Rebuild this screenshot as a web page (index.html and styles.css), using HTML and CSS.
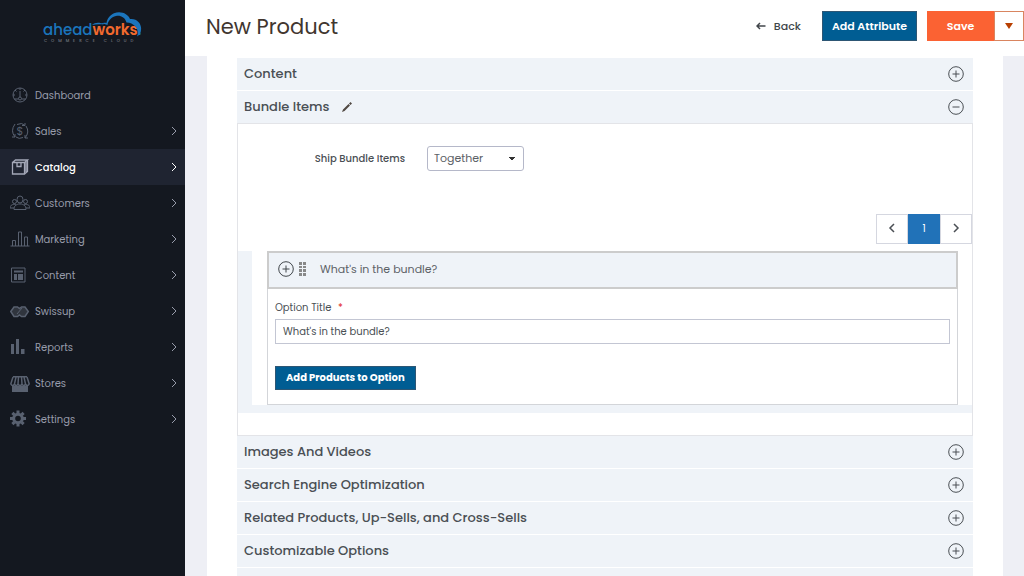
FILE: index.html
```html
<!DOCTYPE html>
<html lang="en"><head><meta charset="utf-8">
<meta name="viewport" content="width=device-width, initial-scale=1">
<title>New Product</title>
<link rel="stylesheet" href="styles.css">
</head><body>
<svg class="defs" aria-hidden="true">
  <symbol id="chevron" viewBox="0 0 8 10"><path d="M2 1l4 4-4 4"/></symbol>
  <symbol id="plus" viewBox="0 0 16 16"><circle cx="8" cy="8" r="7.3"/><path d="M4.5 8h7M8 4.5v7"/></symbol>
  <symbol id="minus" viewBox="0 0 16 16"><circle cx="8" cy="8" r="7.3"/><path d="M4.5 8h7"/></symbol>
</svg>

<div class="app">
  <aside class="sidebar">
    <a class="logo" href="#">
      <svg class="cloud" viewBox="0 0 50 28"><path d="M0 13C3 10 8 10 12 12.500C8 12 4 12 0 13ZM9 11.500C11 10.500 13 10.500 14.500 11C15 7 18 3 22 1.300C29-1.500 36 2 38 7C45 6 50 12 49 18C49 21 47.500 23 45 24.500C47.500 19 44 11 34.500 10.500C33 5 28 3 24 4C19 5 16 9 15.500 13C13 12 12 12 9 11.500Z"/></svg>
      <span class="logo-name">ahead<b>works</b>.</span>
      <span class="logo-sub">COMMERCE CLOUD</span>
    </a>
    <nav class="menu">
      <a href="#">
        <svg class="icon" viewBox="0 0 20 20"><circle cx="10" cy="10" r="7"/><path d="M4.500 14h4M11.500 14h4M10 6v6M10 3v2M3 10h2M15 10h2M5 5l1.500 1.500M15 5l-1.500 1.500"/><circle cx="10" cy="13.500" r="1.500"/></svg>
        <span>Dashboard</span>
      </a>
      <a href="#">
        <svg class="icon" viewBox="0 0 20 20"><path d="M5 3Q0 10 5 16M5 16H2M5 16v-3M7 3.500Q12 1 15 4.500M15 4.500V2M15 4.500h-3M16 5Q20 11 15 17M15 17v-3M15 17h3M13 16.500Q9 18.500 6 16"/><text x="10" y="14" text-anchor="middle">$</text></svg>
        <span>Sales</span><svg class="arrow"><use href="#chevron"/></svg>
      </a>
      <a class="active" href="#">
        <svg class="icon bold" viewBox="0 0 20 20"><path d="M2.500 5.500h12v11.500h-12zM2.500 5.500l3-2.500h12l-3 2.500M17.500 3v11.500l-3 2.500M16 4.500v11.500M7 5.500v4h4v-4"/></svg>
        <span>Catalog</span><svg class="arrow"><use href="#chevron"/></svg>
      </a>
      <a href="#">
        <svg class="icon" viewBox="0 0 20 20"><ellipse cx="10" cy="6.500" rx="3" ry="3.500"/><circle cx="4.500" cy="8.500" r="2"/><circle cx="15.500" cy="8.500" r="2"/><path d="M4 16.500h12c0-4-2-4.500-4.500-5.500h-3C6 12 4 12.500 4 16.500zM4 15H0c0-3 2-3 4-4l2 1M16 15h4c0-3-2-3-4-4l-2 1"/></svg>
        <span>Customers</span><svg class="arrow"><use href="#chevron"/></svg>
      </a>
      <a href="#">
        <svg class="icon" viewBox="0 0 20 20"><path d="M.5 17h19M2.500 17v-5.500h3V17M8.500 17V3h3v14M14.500 17V8h3v9"/></svg>
        <span>Marketing</span><svg class="arrow"><use href="#chevron"/></svg>
      </a>
      <a href="#">
        <svg class="icon" viewBox="0 0 20 20"><path d="M1.500 3h13.500v14h-13.500z"/><path class="fill" d="M4 5.500h9v2H4zM4 9h3v6H4zM8 9h5v6H8z"/></svg>
        <span>Content</span><svg class="arrow"><use href="#chevron"/></svg>
      </a>
      <a href="#">
        <svg class="icon" viewBox="0 0 20 20"><path class="dim" d="M4 6.500h11l3 4-3 4.500H4l-3-4.500z"/><path class="heavy" d="M4 6h3.500l2 1.500 2-1.500H15l3.300 4.500L15 15.500h-3.500l-2-1.500-2 1.500H4L.8 10.500z"/><path d="M7 13l5-6"/></svg>
        <span>Swissup</span><svg class="arrow"><use href="#chevron"/></svg>
      </a>
      <a href="#">
        <svg class="icon" viewBox="0 0 20 20"><path class="fill" d="M1 7h3v10H1zM6 2h3v15H6zM11 12h3.500v5H11z"/></svg>
        <span>Reports</span><svg class="arrow"><use href="#chevron"/></svg>
      </a>
      <a href="#">
        <svg class="icon" viewBox="0 0 20 20"><path class="fill" d="M2 13h16v6H2zM3 3h14v1.500H3z"/><path class="heavy" d="M3 4L.8 11q1.700 3 3.700 0L6 4M8.500 4L8 11q-1.500 3-3.500 0M11.500 4l.5 7q-2 3-4 0M14 4l1.500 7q-2 3-3.500 0M17 4l2.200 7q-1.700 3-3.700 0"/></svg>
        <span>Stores</span><svg class="arrow"><use href="#chevron"/></svg>
      </a>
      <a href="#">
        <svg class="icon" viewBox="0 0 20 20"><circle class="gear" cx="8" cy="9.500" r="4.300"/><path class="teeth" d="M8 1.500v3M8 14.500v3M0 9.500h3M13 9.500h3M2.400 3.900l2 2M11.600 13.100l2 2M2.400 15.100l2-2M11.600 5.900l2-2"/></svg>
        <span>Settings</span><svg class="arrow"><use href="#chevron"/></svg>
      </a>
    </nav>
  </aside>

  <main class="page">
    <header class="toolbar">
      <h1>New Product</h1>
      <button class="back" type="button"><svg viewBox="0 0 10 8"><path d="M9.500 4H1M4 1L1 4l3 3"/></svg>Back</button>
      <button class="btn" type="button">Add Attribute</button>
      <div class="split">
        <button class="save" type="button">Save</button>
        <button class="toggle" type="button" aria-label="More save options"><svg viewBox="0 0 8 6"><path d="M0 0h8L4 6z"/></svg></button>
      </div>
    </header>

    <div class="scroll">
      <div class="card">
        <section>
          <button class="section-title" type="button">Content<svg class="state"><use href="#plus"/></svg></button>
        </section>
        <section class="open">
          <button class="section-title" type="button">Bundle Items
            <svg class="pencil" viewBox="0 0 10 10"><path d="M0 10l1-2.500 5.500-5.500 1.500 1.500L2.500 9zM7 1.500L8.500 0 10 1.500 8.500 3z"/></svg>
            <svg class="state"><use href="#minus"/></svg>
          </button>
          <div class="section-body">
            <div class="ship">
              <label for="ship">Ship Bundle Items</label>
              <select id="ship"><option>Together</option><option>Separately</option></select>
            </div>
            <div class="pager">
              <button type="button" aria-label="Previous"><svg viewBox="0 0 8 10"><path d="M6 1L2 5l4 4"/></svg></button>
              <button class="current" type="button">1</button>
              <button type="button" aria-label="Next"><svg><use href="#chevron"/></svg></button>
            </div>
            <div class="options">
              <div class="options-inner">
                <div class="option">
                  <div class="option-head">
                    <svg class="state"><use href="#plus"/></svg>
                    <svg class="grip" viewBox="0 0 8 14"><path d="M0 0h3v3H0zM4 0h3v3H4zM0 4h3v2H0zM4 4h3v2H4zM0 7h3v3H0zM4 7h3v3H4zM0 11h3v3H0zM4 11h3v3H4z"/></svg>
                    <span>What's in the bundle?</span>
                  </div>
                  <div class="option-body">
                    <label for="title">Option Title <em>*</em></label>
                    <input id="title" type="text" value="What's in the bundle?">
                    <button class="btn small" type="button">Add Products to Option</button>
                  </div>
                </div>
              </div>
            </div>
          </div>
        </section>
        <section>
          <button class="section-title" type="button">Images And Videos<svg class="state"><use href="#plus"/></svg></button>
        </section>
        <section>
          <button class="section-title" type="button">Search Engine Optimization<svg class="state"><use href="#plus"/></svg></button>
        </section>
        <section>
          <button class="section-title" type="button">Related Products, Up-Sells, and Cross-Sells<svg class="state"><use href="#plus"/></svg></button>
        </section>
        <section>
          <button class="section-title" type="button">Customizable Options<svg class="state"><use href="#plus"/></svg></button>
        </section>
        <section>
          <button class="section-title" type="button" aria-label="More settings"><svg class="state"><use href="#plus"/></svg></button>
        </section>
      </div>
    </div>
  </main>
</div>
</body></html>
```
FILE: styles.css
```css
* {
  box-sizing: border-box;
}
body {
  margin: 0;
  font-family: Poppins, Inter, sans-serif;
  font-size: 11px;
  color: #4a4f54;
  background: #eeeff5;
}
button, select, input {
  font: inherit;
  color: inherit;
  margin: 0;
  border-radius: 0;
}
button {
  cursor: pointer;
}
svg {
  fill: none;
  stroke: currentColor;
  flex: none;
}
.defs {
  position: absolute;
  width: 0;
  height: 0;
}
.app {
  display: flex;
  height: 100vh;
}

/* sidebar */
.sidebar {
  width: 185px;
  flex: none;
  background: #141820;
}
.logo {
  position: relative;
  display: block;
  height: 77px;
  padding: 21px 0 0 43px;
  color: #1b75bc;
  text-decoration: none;
}
.logo-name {
  display: block;
  font-size: 15px;
  line-height: 18px;
  font-weight: 500;
}
.logo-name b {
  color: #f26a2e;
  font-weight: 600;
}
.logo-sub {
  display: block;
  font-size: 4px;
  line-height: 4px;
  letter-spacing: 4px;
  margin-left: 1px;
  color: #8b8f98;
  white-space: nowrap;
}
.cloud {
  position: absolute;
  left: 92px;
  top: 12px;
  width: 50px;
  height: 28px;
  fill: #1b75bc;
  stroke: none;
}
.menu a {
  display: flex;
  align-items: center;
  height: 36px;
  padding: 0 7px 0 10px;
  color: #989cab;
  font-size: 10px;
  text-decoration: none;
}
.menu span {
  flex: 1;
  margin-left: 5px;
  padding-top: 2px;
}
.icon {
  width: 20px;
  height: 20px;
  color: #596170;
}
.icon text {
  font-size: 11px;
  fill: currentColor;
  stroke: none;
}
.icon .fill {
  fill: currentColor;
  stroke: none;
}
.icon .dim {
  fill: #30353e;
  stroke: none;
}
.icon .heavy {
  stroke-width: 1.5;
}
.icon .gear, .icon .teeth {
  stroke-width: 3;
}
.icon.bold {
  stroke-width: 1.3;
}
.arrow {
  width: 8px;
  height: 10px;
}
.menu .active {
  background: #1f2431;
  color: #fff;
  font-weight: 500;
}
.active .icon {
  color: #a4a8b8;
}

/* header */
.page {
  flex: 1;
  min-width: 0;
  display: flex;
  flex-direction: column;
}
.toolbar {
  display: flex;
  align-items: center;
  flex: none;
  height: 56px;
  padding: 0 0 4px 21px;
  background: #fff;
}
h1 {
  flex: 1;
  margin: 0;
  font-size: 21px;
  font-weight: 400;
  color: #41362f;
}
.back {
  display: flex;
  align-items: center;
  gap: 8px;
  margin-right: 21px;
  padding: 0;
  border: 0;
  background: none;
  color: #41464b;
  font-weight: 500;
}
.back svg {
  width: 10px;
  height: 8px;
  stroke-width: 1.5;
}
.btn {
  height: 30px;
  padding: 0 9px;
  border: 1px solid #2d5674;
  background: #005d93;
  color: #fff;
  font-weight: 600;
  white-space: nowrap;
}
.split {
  display: flex;
  height: 30px;
  margin-left: 10px;
}
.save {
  width: 67px;
  border: 0;
  background: #fb6233;
  color: #fff;
  font-weight: 600;
}
.toggle {
  display: flex;
  align-items: center;
  justify-content: center;
  width: 30px;
  padding: 0;
  border: 1px solid #d98560;
  background: #fff;
}
.toggle svg {
  width: 8px;
  height: 6px;
  fill: #b84002;
  stroke: none;
}

/* form sections */
.scroll {
  flex: 1;
  min-height: 0;
  overflow-y: auto;
  scrollbar-width: none;
}
.card {
  margin: 0 21px 0 22px;
  padding: 2px 30px 20px;
  background: #fff;
}
.section-title {
  display: flex;
  align-items: center;
  width: 100%;
  height: 33px;
  padding: 0 9px 0 7px;
  border: 0;
  border-bottom: 1px solid #fff;
  background: #eff3f8;
  font-size: 13px;
  font-weight: 500;
  text-align: left;
}
.open .section-title {
  height: 32px;
  border-bottom: 0;
}
.state {
  width: 16px;
  height: 16px;
}
.section-title .state {
  margin-left: auto;
}
.pencil {
  width: 10px;
  height: 10px;
  margin-left: 13px;
  fill: #514943;
  stroke: none;
}
.section-body {
  border: 1px solid #e3e4e8;
  padding: 22px 0;
}
.ship {
  display: flex;
  align-items: center;
}
.ship label {
  width: 167px;
  margin-right: 22px;
  font-size: 10px;
  font-weight: 500;
  text-align: right;
}
.ship select {
  appearance: none;
  width: 97px;
  height: 25px;
  padding: 0 6px 2px;
  border: 1px solid #b5b8c9;
  border-radius: 3px;
  color: #5c6166;
  background: linear-gradient(to bottom right, #333 50%, transparent 51%) no-repeat right 8px center / 3px 4px, linear-gradient(to bottom left, #333 50%, transparent 51%) no-repeat right 11px center / 3px 4px, #fff;
}
.pager {
  display: flex;
  justify-content: flex-end;
  margin: 43px 0 7px;
}
.pager button {
  display: flex;
  align-items: center;
  justify-content: center;
  width: 32px;
  height: 30px;
  padding: 0 0 2px;
  border: 1px solid #d5d7e0;
  background: #fff;
}
.pager svg {
  width: 8px;
  height: 10px;
  stroke-width: 1.5;
}
.pager .current {
  padding: 0;
  border-color: #2172b8;
  background: #2172b8;
  color: #fff;
  font-size: 10px;
}
.options {
  padding: 0 0 8px 14px;
  background: #eff3f8;
}
.options-inner {
  padding: 0 14px 0 15px;
  background: #fff;
}
.option {
  border: 1px solid #d3d5d9;
  border-top: 0;
}
.option-head {
  display: flex;
  align-items: center;
  height: 38px;
  margin: 0 -1px;
  padding: 0 9px 2px;
  border: 2px solid #ccc;
  background: #eff3f8;
  color: #5c6166;
}
.option-head .state {
  color: #41464b;
}
.grip {
  width: 8px;
  height: 14px;
  margin: 0 13px 0 5px;
  fill: #888;
  stroke: none;
}
.option-body {
  padding: 11px 7px 14px;
}
.option-body label {
  display: block;
  font-size: 10px;
  line-height: 16px;
}
.option-body em {
  margin-left: 4px;
  color: #e22626;
  font-style: normal;
}
.option-body input {
  display: block;
  width: 100%;
  height: 25px;
  margin: 3px 0 22px;
  padding: 0 7px;
  border: 1px solid #c3c6d3;
  font-size: 10px;
}
.btn.small {
  height: 24px;
  padding: 0 10px;
  font-size: 10px;
  font-weight: 700;
}
```
